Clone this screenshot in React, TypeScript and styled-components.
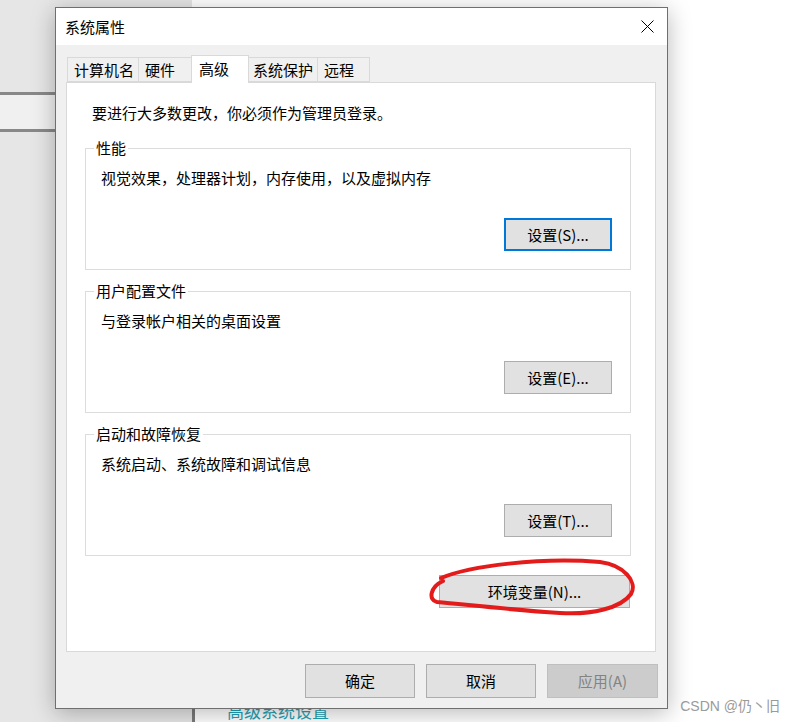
import React from "react";
import styled, { createGlobalStyle } from "styled-components";

const GlobalStyle = createGlobalStyle`
  html, body { margin: 0; padding: 0; background: #ffffff; }
  body {
    font-family: "Noto Sans CJK SC", "Microsoft YaHei", "Noto Sans", sans-serif;
    color: #000;
  }
  * { box-sizing: border-box; }
`;

const Page = styled.div`
  position: relative;
  width: 795px;
  height: 722px;
  overflow: hidden;
  display: grid;
  grid-template-columns: 192px 1fr;
  background: #ffffff;
`;

const LeftPane = styled.div`
  background: #e6e6e6;
  display: flex;
  flex-direction: column;
  padding-top: 92px;
`;

const ListDivider = styled.div`
  height: 3px;
  background: #888888;
`;

const ListItem = styled.div`
  height: 34px;
  background: #f0f0f0;
`;

const RightPane = styled.div`
  display: flex;
  flex-direction: column;
  justify-content: flex-end;
  background: #ffffff;
`;

const BottomStrip = styled.div`
  height: 40px;
  border-left: 3px solid #7a7a7a;
  padding: 22px 0 0 32px;
`;

const TealLink = styled.span`
  display: block;
  font-size: 17px;
  line-height: 17px;
  color: #1fa3b6;
  white-space: nowrap;
  margin-top: -2px;
`;

const Dialog = styled.div`
  position: absolute;
  left: 55px;
  top: 7px;
  width: 613px;
  height: 702px;
  border: 1px solid #6f6f6f;
  background: #f0f0f0;
  display: flex;
  flex-direction: column;
  box-shadow: 0 4px 22px rgba(0, 0, 0, 0.28);
`;

const TitleBar = styled.div`
  height: 37px;
  flex: none;
  background: #ffffff;
  display: flex;
  align-items: center;
  justify-content: space-between;
  padding: 0 13px 0 9px;
`;

const TitleText = styled.span`
  font-size: 15px;
  line-height: 20px;
`;

const CloseIcon = styled.svg`
  display: block;
  width: 13px;
  height: 13px;
`;

const Body = styled.div`
  flex: 1;
  display: flex;
  flex-direction: column;
  padding: 10px 11px 10px 10px;
`;

const TabStrip = styled.div`
  height: 27px;
  display: flex;
  align-items: flex-end;
  padding-left: 1px;
`;

const Tab = styled.div<{ $w: number; $active?: boolean; $first?: boolean }>`
  position: relative;
  width: ${(p) => p.$w}px;
  height: ${(p) => (p.$active ? 28 : 25)}px;
  margin-bottom: ${(p) => (p.$active ? -1 : 0)}px;
  margin-left: ${(p) => (p.$active ? -2 : p.$first ? 0 : -1)}px;
  margin-right: ${(p) => (p.$active ? -2 : 0)}px;
  z-index: ${(p) => (p.$active ? 2 : 1)};
  border: 1px solid #d9d9d9;
  border-bottom: ${(p) => (p.$active ? "none" : "1px solid #d9d9d9")};
  background: ${(p) => (p.$active ? "#ffffff" : "#f0f0f0")};
  padding: ${(p) => (p.$active ? "3px 0 0 7px" : "2px 0 0 6px")};
  font-size: 15px;
  line-height: 20px;
  white-space: nowrap;
`;

const Panel = styled.div`
  height: 570px;
  background: #ffffff;
  border: 1px solid #d9d9d9;
  display: flex;
  flex-direction: column;
  padding: 20px 24px 0 18px;
`;

const Intro = styled.div`
  font-size: 15px;
  line-height: 20px;
  margin-left: 7px;
  margin-bottom: 15px;
`;

const Group = styled.fieldset`
  margin: 0 0 11px 0;
  padding: 0 18px 18px 15px;
  border: 1px solid #dcdcdc;
  min-width: 0;
  display: flex;
  flex-direction: column;
`;

const Legend = styled.legend`
  margin-left: -7px;
  padding: 0 2px;
  font-size: 15px;
  line-height: 20px;
`;

const GroupDesc = styled.div`
  font-size: 15px;
  line-height: 20px;
  margin-top: 10px;
  height: 20px;
`;

const Button = styled.button<{ $w: number; $h?: number; $focused?: boolean }>`
  width: ${(p) => p.$w}px;
  height: ${(p) => p.$h ?? 33}px;
  background: #e1e1e1;
  border: ${(p) => (p.$focused ? "2px solid #0078d7" : "1px solid #adadad")};
  font-family: "Noto Sans CJK SC", "Microsoft YaHei", sans-serif;
  font-size: 15px;
  line-height: 20px;
  color: #000;
  padding: 0;
  display: flex;
  align-items: center;
  justify-content: center;
  &:disabled {
    background: #cccccc;
    border-color: #bfbfbf;
    color: #838383;
  }
`;

const GroupButton = styled(Button)`
  align-self: flex-end;
  margin-top: 30px;
`;

const EnvButton = styled(Button)`
  align-self: flex-end;
  margin-top: 8px;
  margin-right: 1px;
`;

const ButtonRow = styled.div`
  display: flex;
  justify-content: flex-end;
  gap: 11px;
  margin-top: 12px;
  margin-right: -2px;
`;

const Annotation = styled.svg`
  position: absolute;
  left: 0;
  top: 0;
  width: 795px;
  height: 722px;
  pointer-events: none;
`;

const Watermark = styled.div`
  position: absolute;
  right: 15px;
  bottom: 7px;
  font-family: "Liberation Sans", "Noto Sans CJK SC", sans-serif;
  font-size: 14px;
  line-height: 18px;
  color: #9a9a9a;
  white-space: nowrap;
`;

const tabs = [
  { label: "计算机名", w: 72 },
  { label: "硬件", w: 55 },
  { label: "高级", w: 58, active: true },
  { label: "系统保护", w: 72 },
  { label: "远程", w: 53 },
];

const groups = [
  { title: "性能", desc: "视觉效果，处理器计划，内存使用，以及虚拟内存", btn: "设置(S)...", focused: true },
  { title: "用户配置文件", desc: "与登录帐户相关的桌面设置", btn: "设置(E)..." },
  { title: "启动和故障恢复", desc: "系统启动、系统故障和调试信息", btn: "设置(T)..." },
];

export default function App() {
  return (
    <>
      <GlobalStyle />
      <Page>
        <LeftPane>
          <ListDivider />
          <ListItem />
          <ListDivider />
        </LeftPane>
        <RightPane>
          <BottomStrip>
            <TealLink>高级系统设置</TealLink>
          </BottomStrip>
        </RightPane>

        <Dialog>
          <TitleBar>
            <TitleText>系统属性</TitleText>
            <CloseIcon viewBox="0 0 13 13">
              <path d="M0.5 0.5 L12.5 12.5 M12.5 0.5 L0.5 12.5" stroke="#000" strokeWidth="1" fill="none" />
            </CloseIcon>
          </TitleBar>
          <Body>
            <TabStrip>
              {tabs.map((t, i) => (
                <Tab key={t.label} $w={t.w} $active={t.active} $first={i === 0}>
                  {t.label}
                </Tab>
              ))}
            </TabStrip>
            <Panel>
              <Intro>要进行大多数更改，你必须作为管理员登录。</Intro>
              {groups.map((g) => (
                <Group key={g.title}>
                  <Legend>{g.title}</Legend>
                  <GroupDesc>{g.desc}</GroupDesc>
                  <GroupButton $w={108} $focused={g.focused}>
                    {g.btn}
                  </GroupButton>
                </Group>
              ))}
              <EnvButton $w={191} $h={33}>环境变量(N)...</EnvButton>
            </Panel>
            <ButtonRow>
              <Button $w={110} $h={34}>确定</Button>
              <Button $w={110} $h={34}>取消</Button>
              <Button $w={111} $h={34} disabled>
                应用(A)
              </Button>
            </ButtonRow>
          </Body>
        </Dialog>

        <Annotation viewBox="0 0 795 722">
          <path
            d="M441 578 C 470 566, 540 557, 600 562 C 624 565, 638 582, 631 594 C 621 608, 592 615, 560 613 C 512 610, 470 605, 437 602 C 428 600, 430 587, 443 581"
            stroke="#e31b1b"
            strokeWidth="4"
            fill="none"
            strokeLinecap="round"
            strokeLinejoin="round"
          />
        </Annotation>

        <Watermark>CSDN @仍丶旧</Watermark>
      </Page>
    </>
  );
}
